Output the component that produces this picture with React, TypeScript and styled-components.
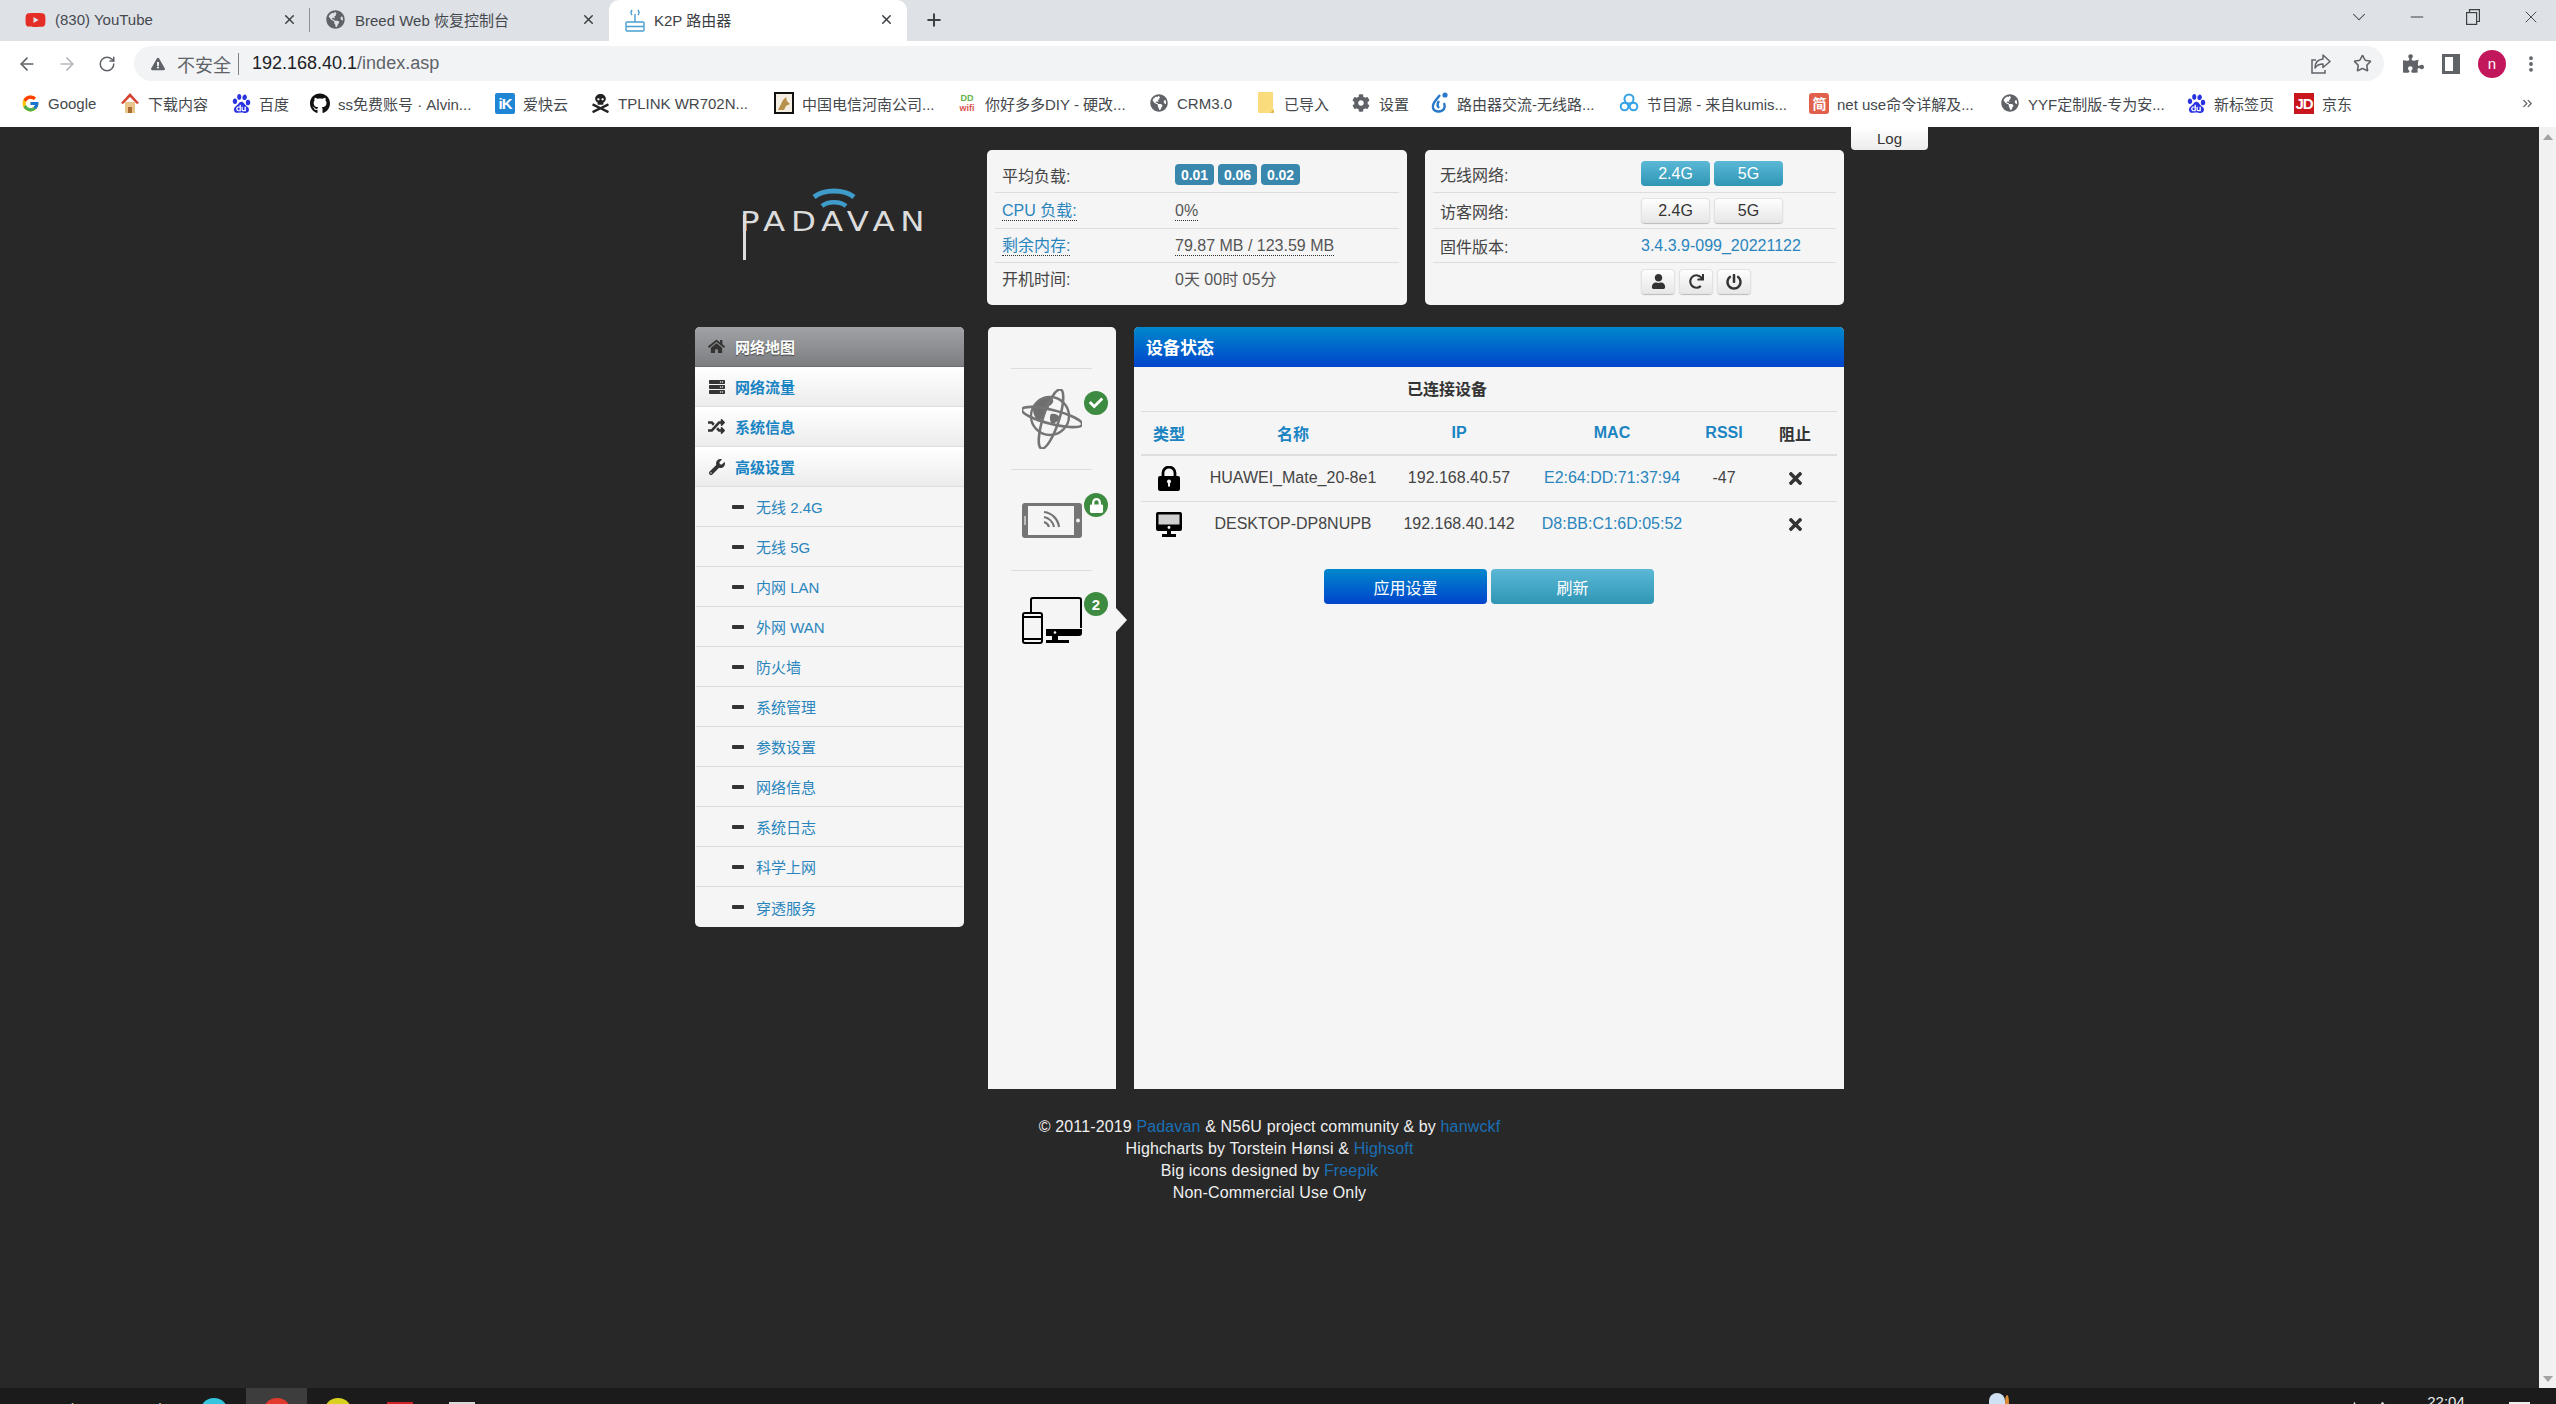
import React from "react";
import styled, { createGlobalStyle } from "styled-components";
import { ArrowLeft, ArrowRight, ChevronDown, ChevronsRight, Minus as LineMinus, MoreVertical, Plus, RotateCw, Star, X } from "lucide-react";
import {
  FaCheck, FaCog, FaExclamationTriangle, FaGithub, FaGlobeAmericas, FaHome, FaLock, FaPowerOff, FaPuzzlePiece,
  FaRandom, FaRedo, FaServer, FaSkullCrossbones, FaTimes, FaUser, FaWrench, FaYoutube,
} from "react-icons/fa";
import { FcGoogle } from "react-icons/fc";
import { SiBaidu } from "react-icons/si";

const SANS = `"Liberation Sans", "Noto Sans CJK SC", sans-serif`;

const Global = createGlobalStyle`
  html, body { margin: 0; padding: 0; background: #282828; overflow: hidden; }
  * { box-sizing: border-box; }
  body { font-family: ${SANS}; }
`;

const Window = styled.div`
  width: 2556px;
  height: 1404px;
  display: flex;
  flex-direction: column;
  overflow: hidden;
`;

/* ---- browser tabs ---- */
const TabStrip = styled.div`
  height: 41px;
  flex: none;
  background: #dee1e6;
  display: flex;
  align-items: stretch;
  padding-left: 10px;
  position: relative;
`;
const Tab = styled.div<{ $active?: boolean; $divided?: boolean }>`
  width: ${(p) => (p.$active ? 298 : p.$divided ? 300 : 299)}px;
  display: flex;
  align-items: center;
  padding: 0 13px 2px 15px;
  background: ${(p) => (p.$active ? "#fff" : "transparent")};
  border-radius: 10px 10px 0 0;
  position: relative;
  font-size: 15px;
  color: ${(p) => (p.$active ? "#3c4043" : "#45494e")};
  &::after {
    content: "";
    display: ${(p) => (p.$divided ? "block" : "none")};
    position: absolute;
    right: 0;
    top: 8px;
    bottom: 9px;
    width: 1px;
    background: #8e9196;
  }
`;
const TabIcon = styled.span`
  width: 21px;
  height: 24px;
  margin-right: 9px;
  display: flex;
  align-items: center;
  justify-content: center;
  flex: none;
`;
const TabTitle = styled.span`
  flex: 1;
  white-space: nowrap;
  overflow: hidden;
`;
const NewTab = styled.span`
  width: 24px;
  margin-left: 15px;
  padding-bottom: 2px;
  display: flex;
  align-items: center;
  justify-content: center;
  color: #3c4043;
`;
const WindowControls = styled.div`
  margin-left: auto;
  display: flex;
  align-items: flex-start;
  color: #3c4043;
`;
const WindowControl = styled.span<{ $w: number }>`
  width: ${(p) => p.$w}px;
  height: 33px;
  display: flex;
  align-items: center;
  justify-content: center;
`;

/* ---- address toolbar ---- */
const Toolbar = styled.div`
  height: 40px;
  flex: none;
  background: #fff;
  padding: 5px 0 0 7px;
  display: flex;
  align-items: flex-start;
  color: #5f6368;
`;
const NavButton = styled.span<{ $dim?: boolean }>`
  width: 40px;
  height: 35px;
  display: flex;
  align-items: center;
  justify-content: center;
  color: ${(p) => (p.$dim ? "#b5b8bc" : "#5f6368")};
`;
const Omnibox = styled.div`
  margin-left: 7px;
  width: 2250px;
  height: 35px;
  border-radius: 18px;
  background: #f1f3f4;
  display: flex;
  align-items: center;
  padding: 0 12px 0 17px;
  font-size: 18px;
`;
const Insecure = styled.span`
  color: #5f6368;
  font-size: 18px;
  margin-left: 12px;
`;
const OmniDivider = styled.span`
  width: 1px;
  height: 22px;
  background: #7d8084;
  margin: 0 13px 0 7px;
`;
const UrlHost = styled.span`
  color: #202124;
`;
const UrlPath = styled.span`
  color: #5f6368;
`;
const OmniActions = styled.span`
  margin-left: auto;
  display: flex;
  gap: 22px;
  align-items: center;
  color: #5f6368;
`;
const ToolActions = styled.div`
  display: flex;
  align-items: center;
  height: 35px;
  margin-left: 19px;
  gap: 18px;
  color: #5f6368;
`;
const Avatar = styled.span`
  width: 28px;
  height: 28px;
  border-radius: 50%;
  background: #c2185b;
  color: #fff;
  font-size: 15px;
  display: flex;
  align-items: center;
  justify-content: center;
`;
const MenuDots = styled(MoreVertical)`
  margin-left: -3px;
`;

/* ---- bookmarks ---- */
const BookmarkBar = styled.div`
  height: 46px;
  flex: none;
  background: #fff;
  display: flex;
  align-items: center;
  padding: 0 0 2px 20px;
  font-size: 15px;
  color: #45484c;
`;
const Bookmark = styled.div<{ $w: number }>`
  width: ${(p) => p.$w}px;
  flex: none;
  display: flex;
  align-items: center;
  gap: 8px;
`;
const BookmarkIcon = styled.span`
  width: 20px;
  height: 22px;
  flex: none;
  display: flex;
  align-items: center;
  justify-content: center;
`;
const BookmarkLabel = styled.span`
  white-space: nowrap;
  overflow: hidden;
`;
const Overflow = styled.span`
  margin-left: 166px;
  color: #5f6368;
  display: flex;
`;
const SquareFav = styled.span<{ $bg: string; $size?: number; $radius?: number }>`
  width: 20px;
  height: 21px;
  background: ${(p) => p.$bg};
  color: #fff;
  border-radius: ${(p) => p.$radius ?? 2}px;
  font-size: ${(p) => p.$size ?? 14}px;
  font-weight: 700;
  display: flex;
  align-items: center;
  justify-content: center;
  letter-spacing: -1px;
`;
const DdFav = styled.span`
  display: flex;
  flex-direction: column;
  align-items: center;
  font-size: 9px;
  line-height: 10px;
  font-weight: 700;
  color: #5fb34a;
  & > i {
    font-style: normal;
    color: #d9534f;
  }
`;

/* ---- router page ---- */
const Viewport = styled.div`
  flex: 1;
  min-height: 0;
  display: flex;
  background: #282828;
`;
const Page = styled.main`
  flex: 1;
  position: relative;
  padding: 23px 0 0 695px;
  color: #333;
  font-size: 16px;
`;
const Container = styled.div`
  width: 1149px;
`;
const LogTab = styled.div`
  position: absolute;
  top: 0;
  left: 1851px;
  width: 77px;
  height: 23px;
  border-radius: 0 0 4px 4px;
  background: linear-gradient(#fff, #ececec);
  color: #333;
  font-size: 15px;
  display: flex;
  align-items: center;
  justify-content: center;
`;
const TopRow = styled.div`
  display: flex;
  height: 155px;
`;
const Logo = styled.div`
  width: 292px;
  flex: none;
  position: relative;
`;
const WifiMark = styled.svg`
  position: absolute;
  left: 117px;
  top: 38px;
`;
const LogoWord = styled.span`
  position: absolute;
  left: 45px;
  top: 55px;
  font-family: "DejaVu Sans", "Liberation Sans", sans-serif;
  font-size: 27px;
  line-height: 34px;
  letter-spacing: 4.7px;
  color: #dcdcdc;
  white-space: nowrap;
  transform: scaleX(1.2);
  transform-origin: left center;
`;
const LogoStem = styled.span`
  position: absolute;
  left: 48px;
  top: 65px;
  width: 3px;
  height: 45px;
  background: #dcdcdc;
`;
const StatusPanel = styled.section<{ $w: number; $mr?: number }>`
  width: ${(p) => p.$w}px;
  margin-right: ${(p) => p.$mr ?? 0}px;
  background: #f5f5f5;
  border-radius: 5px;
  padding: 5px 8px;
  display: grid;
  grid-template-rows: 38px 36px 34px 1fr;
`;
const StatusRow = styled.div<{ $label: number; $last?: boolean; $nudge?: number }>`
  display: grid;
  grid-template-columns: ${(p) => p.$label}px 1fr;
  align-items: center;
  padding: ${(p) => Math.max(p.$nudge ?? 0, 0)}px 7px ${(p) => Math.max(-(p.$nudge ?? 0), 0)}px;
  border-bottom: ${(p) => (p.$last ? "none" : "1px solid #ddd")};
  white-space: nowrap;
`;
const StatusLabel = styled.span`
  color: #444;
`;
const Probe = styled.span<{ $blue?: boolean }>`
  justify-self: start;
  color: ${(p) => (p.$blue ? "#2a85bd" : "#555")};
  border-bottom: 1px dotted #333;
  line-height: 19px;
`;
const PlainValue = styled.span`
  color: #555;
`;
const FirmwareLink = styled.span`
  color: #2a85bd;
`;
const BadgeRow = styled.span`
  display: flex;
  gap: 4px;
`;
const LoadBadge = styled.span`
  width: 39px;
  height: 21px;
  border-radius: 4px;
  background: #3a87ad;
  color: #fff;
  font-size: 14px;
  font-weight: 700;
  display: flex;
  align-items: center;
  justify-content: center;
`;
const ButtonRow = styled.span`
  display: flex;
  gap: 4px;
`;
const ToggleButton = styled.span<{ $on?: boolean }>`
  width: 69px;
  height: 25px;
  border-radius: 4px;
  display: flex;
  align-items: center;
  justify-content: center;
  color: ${(p) => (p.$on ? "#fff" : "#333")};
  background: ${(p) => (p.$on ? "linear-gradient(#5bb8d6, #2f96b4)" : "linear-gradient(#fff, #e6e6e6)")};
  box-shadow: ${(p) => (p.$on ? "none" : "inset 0 0 0 1px #e2e2e2, 0 1px 1px #bbb")};
`;
const IconButton = styled.span`
  width: 34px;
  height: 25px;
  border-radius: 4px;
  display: flex;
  align-items: center;
  justify-content: center;
  color: #333;
  background: linear-gradient(#fff, #e6e6e6);
  box-shadow: inset 0 0 0 1px #e2e2e2, 0 1px 1px #bbb;
`;
const MainRow = styled.div`
  display: flex;
  margin-top: 22px;
  height: 762px;
  align-items: flex-start;
`;
const Menu = styled.nav`
  width: 269px;
  margin-right: 24px;
  flex: none;
  border-radius: 5px;
  overflow: hidden;
  background: #f5f5f5;
`;
const MenuRow = styled.div<{ $active?: boolean }>`
  height: 40px;
  display: flex;
  align-items: center;
  padding-left: 13px;
  font-size: 15px;
  font-weight: 700;
  color: ${(p) => (p.$active ? "#fff" : "#1b84c2")};
  background: ${(p) => (p.$active ? "linear-gradient(#a0a2a5, #7c7e81)" : "linear-gradient(#fff, #ececec)")};
  border-bottom: 1px solid ${(p) => (p.$active ? "#6c6e70" : "#dedede")};
  text-shadow: ${(p) => (p.$active ? "0 1px 1px #444" : "none")};
`;
const MenuGlyph = styled.span<{ $tone: string }>`
  width: 17px;
  margin-right: 10px;
  display: flex;
  justify-content: center;
  color: ${(p) => p.$tone};
`;
const SubRow = styled.div`
  height: 40px;
  margin: 0 1px;
  display: flex;
  align-items: center;
  padding-left: 36px;
  font-size: 15px;
  color: #2a85bd;
  border-bottom: 1px solid #dedede;
  &:last-child {
    border-bottom: none;
  }
`;
const SubDash = styled.span`
  width: 12px;
  height: 4px;
  background: #333;
  border-radius: 1px;
  margin-right: 12px;
`;
const Strip = styled.aside`
  width: 128px;
  height: 762px;
  margin-right: 18px;
  flex: none;
  background: #f5f5f5;
  border-radius: 5px 5px 0 0;
  padding: 41px 24px 0 23px;
  position: relative;
  &::after {
    content: "";
    position: absolute;
    left: 100%;
    top: 281px;
    border-left: 11px solid #f5f5f5;
    border-top: 12px solid transparent;
    border-bottom: 12px solid transparent;
  }
`;
const StripCell = styled.div`
  height: 101px;
  border-top: 1px solid #ddd;
  position: relative;
  display: flex;
  align-items: center;
  justify-content: center;
`;
const StateBadge = styled.span<{ $top: number }>`
  position: absolute;
  top: ${(p) => p.$top}px;
  right: -16px;
  width: 24px;
  height: 24px;
  border-radius: 50%;
  background: #3d8b40;
  color: #fff;
  font-size: 15px;
  font-weight: 700;
  display: flex;
  align-items: center;
  justify-content: center;
`;
const Content = styled.section`
  width: 710px;
  height: 762px;
  flex: none;
  background: #f5f5f5;
  border-radius: 5px 5px 0 0;
  overflow: hidden;
`;
const ContentHead = styled.h2`
  margin: 0;
  height: 40px;
  padding: 0 0 2px 12px;
  display: flex;
  align-items: center;
  font-size: 17px;
  font-weight: 700;
  color: #fff;
  background: linear-gradient(#0088cc, #0044cc);
`;
const ContentBody = styled.div`
  padding: 0 7px;
`;
const DeviceTable = styled.table`
  width: 696px;
  table-layout: fixed;
  border-collapse: collapse;
  font-size: 16px;
  color: #444;
`;
const TableTitle = styled.th`
  height: 44px;
  padding: 0 0 1px;
  font-weight: 700;
  color: #333;
  border-bottom: 1px solid #ddd;
`;
const HeadCell = styled.th<{ $plain?: boolean }>`
  height: 44px;
  padding: 0;
  font-weight: 700;
  color: ${(p) => (p.$plain ? "#333" : "#1b84c2")};
  border-bottom: 2px solid #ddd;
`;
const Cell = styled.td<{ $blue?: boolean }>`
  height: 46px;
  padding: 0;
  text-align: center;
  white-space: nowrap;
  color: ${(p) => (p.$blue ? "#2a85bd" : "#444")};
  border-bottom: 1px solid #ddd;
  tr:last-child > & {
    border-bottom: none;
  }
`;
const TypeGlyph = styled.span`
  display: flex;
  justify-content: center;
`;
const BlockGlyph = styled.span`
  display: flex;
  justify-content: center;
  color: #333;
`;
const ActionRow = styled.div`
  display: flex;
  justify-content: center;
  gap: 4px;
  margin-top: 22px;
`;
const ActionButton = styled.span<{ $tone: "primary" | "info" }>`
  width: 163px;
  height: 35px;
  border-radius: 4px;
  color: #fff;
  display: flex;
  align-items: center;
  justify-content: center;
  background: ${(p) =>
    p.$tone === "primary" ? "linear-gradient(#0088cc, #0044cc)" : "linear-gradient(#5bb8d6, #2f96b4)"};
`;
const Footer = styled.footer`
  margin-top: 27px;
  text-align: center;
  font-size: 16px;
  line-height: 22px;
  letter-spacing: 0.14px;
  color: #f0f0f0;
  & a {
    color: #1b6fb5;
    text-decoration: none;
  }
`;
const Scrollbar = styled.div`
  width: 17px;
  flex: none;
  background: #f1f1f1;
  display: flex;
  flex-direction: column;
  justify-content: space-between;
  align-items: center;
  padding: 7px 0 6px;
`;
const ScrollArrow = styled.span<{ $down?: boolean }>`
  width: 0;
  height: 0;
  border-left: 5px solid transparent;
  border-right: 5px solid transparent;
  border-bottom: ${(p) => (p.$down ? "none" : "6px solid #a3a3a3")};
  border-top: ${(p) => (p.$down ? "6px solid #a3a3a3" : "none")};
`;

/* ---- desktop taskbar, only its top edge is on screen ---- */
const Taskbar = styled.div`
  height: 16px;
  flex: none;
  background: #1b1b1b;
  display: flex;
  overflow: hidden;
  position: relative;
`;
const SearchHint = styled.span`
  margin: 12px 0 0 34px;
  width: 160px;
  color: #d6d6d6;
  font-size: 15px;
  white-space: nowrap;
  overflow: hidden;
`;
const TaskTile = styled.span<{ $on?: boolean; $w: number; $mr?: number }>`
  width: ${(p) => p.$w}px;
  margin-right: ${(p) => p.$mr ?? 0}px;
  background: ${(p) => (p.$on ? "#3d3d3d" : "transparent")};
  display: flex;
  justify-content: center;
`;
const TaskDot = styled.span<{ $bg: string; $square?: boolean }>`
  width: ${(p) => (p.$square ? 26 : 28)}px;
  height: 28px;
  margin-top: ${(p) => (p.$square ? 14 : 10)}px;
  border-radius: ${(p) => (p.$square ? "0" : "50%")};
  background: ${(p) => p.$bg};
`;
const TraySpace = styled.span`
  margin-left: auto;
  display: flex;
  align-items: flex-start;
`;
const TrayMark = styled.span<{ $bg: string; $w: number; $top: number; $mr?: number }>`
  width: ${(p) => p.$w}px;
  height: 16px;
  margin: ${(p) => p.$top}px ${(p) => p.$mr ?? 0}px 0 0;
  border-radius: 50% 50% 0 0;
  background: ${(p) => p.$bg};
`;
const Clock = styled.span`
  color: #eee;
  font-size: 15px;
  line-height: 18px;
  margin-top: 5px;
  width: 56px;
  text-align: center;
`;
const DeskEdge = styled.span`
  width: 21px;
  height: 2px;
  margin: 14px 26px 0 35px;
  background: #eee;
`;

const routerFav = (
  <svg width="20" height="24" viewBox="0 0 20 24" fill="none" stroke="#4a9fd0" strokeWidth="1.4">
    <rect x="1" y="14" width="18" height="9" rx="1" />
    <path d="M1 18.5h18M10 14V6" />
    <path d="M7 7a4 4 0 0 1 0-5M13 7a4 4 0 0 0 0-5" />
  </svg>
);

const houseFav = (
  <svg width="20" height="22" viewBox="0 0 20 22">
    <path d="M5 10h10v11H5z" fill="#e9c58c" />
    <path d="M10 1 1 11l2 1 7-7 7 7 2-1z" fill="#d8412f" />
    <path d="M8 15h4v6H8z" fill="#a86b32" />
  </svg>
);

const telecomFav = (
  <svg width="20" height="22" viewBox="0 0 20 22">
    <rect x="1" y="1" width="18" height="20" fill="#f4efe2" stroke="#111" strokeWidth="2" />
    <path d="M4 18 9 8l3-3 1 4 3 3-4 2-2 4z" fill="#b8914e" />
  </svg>
);

const folderFav = (
  <svg width="16" height="22" viewBox="0 0 16 22">
    <path d="M0 1a1 1 0 0 1 1-1h14v20a1 1 0 0 1-1 1H1a1 1 0 0 1-1-1z" fill="#fbdc7d" />
    <path d="M12 21l4-4v4z" fill="#e0b94f" />
  </svg>
);

const dropFav = (
  <svg width="20" height="22" viewBox="0 0 20 22" fill="none" stroke="#2a78c8" strokeWidth="2.4">
    <path d="M11 3C6 9 3 12 4 16c1 4 8 5 11 1 1-2 1-4 0-6" />
    <path d="M10 9c-2 3-2 5 0 7" />
    <circle cx="16" cy="3" r="1.4" fill="#2a78c8" />
  </svg>
);

const cloudFav = (
  <svg width="20" height="22" viewBox="0 0 20 22" fill="none" stroke="#35a3e6" strokeWidth="2">
    <circle cx="10" cy="7" r="4.5" />
    <circle cx="5.5" cy="14.5" r="3.8" />
    <circle cx="14.5" cy="14.5" r="3.8" />
  </svg>
);

const bookmarks: { label: string; w: number; icon: React.ReactNode }[] = [
  { label: "Google", w: 100, icon: <FcGoogle size={19} /> },
  { label: "下载内容", w: 111, icon: houseFav },
  { label: "百度", w: 79, icon: <SiBaidu size={19} color="#2932e1" /> },
  { label: "ss免费账号 · Alvin...", w: 185, icon: <FaGithub size={21} color="#111" /> },
  { label: "爱快云", w: 95, icon: <SquareFav $bg="#1f86d6" $size={15}>iK</SquareFav> },
  { label: "TPLINK WR702N...", w: 184, icon: <FaSkullCrossbones size={19} color="#222" /> },
  { label: "中国电信河南公司...", w: 183, icon: telecomFav },
  { label: "你好多多DIY - 硬改...", w: 192, icon: <DdFav>DD<i>wifi</i></DdFav> },
  { label: "CRM3.0", w: 107, icon: <FaGlobeAmericas size={18} color="#5f6368" /> },
  { label: "已导入", w: 95, icon: folderFav },
  { label: "设置", w: 78, icon: <FaCog size={18} color="#5f6368" /> },
  { label: "路由器交流-无线路...", w: 190, icon: dropFav },
  { label: "节目源 - 来自kumis...", w: 190, icon: cloudFav },
  { label: "net use命令详解及...", w: 191, icon: <SquareFav $bg="#e0604c" $size={14} $radius={3}>简</SquareFav> },
  { label: "YYF定制版-专为安...", w: 186, icon: <FaGlobeAmericas size={18} color="#5f6368" /> },
  { label: "新标签页", w: 108, icon: <SiBaidu size={19} color="#2932e1" /> },
  { label: "京东", w: 60, icon: <SquareFav $bg="#c9151e" $size={15} $radius={0}>JD</SquareFav> },
];

const subMenu = ["无线 2.4G", "无线 5G", "内网 LAN", "外网 WAN", "防火墙", "系统管理", "参数设置", "网络信息", "系统日志", "科学上网", "穿透服务"];

const RestoreIcon = () => (
  <svg width="14" height="16" viewBox="0 0 14 16" fill="none" stroke="currentColor" strokeWidth="1.2">
    <rect x="0.6" y="3.6" width="10" height="11.800" />
    <path d="M3.500 3.500V0.600H13.400V12.500H10.500" />
  </svg>
);

const ShareBoxIcon = () => (
  <svg width="20" height="21" viewBox="0 0 20 21" fill="none" stroke="currentColor" strokeWidth="1.5">
    <path d="M5 7H1v13h13v-3" />
    <path d="M12 2l7 6.500-7 6V11c-4 0-6 1-8 4 0-5 3-8.500 8-9z" strokeLinejoin="round" />
  </svg>
);

const SidePanelIcon = () => (
  <svg width="18" height="20" viewBox="0 0 18 20">
    <path d="M0 0h18v20H0zM3 3v14h8V3z" fill="currentColor" fillRule="evenodd" />
  </svg>
);

const PadlockGlyph = () => (
  <svg width="22" height="25" viewBox="0 0 22 25">
    <path d="M5 11V7a6 6 0 0 1 12 0v4" fill="none" stroke="#000" strokeWidth="2.800" />
    <rect x="0" y="10" width="22" height="15" rx="2" fill="#000" />
    <circle cx="11" cy="15.500" r="2" fill="#f5f5f5" />
    <rect x="10" y="15.500" width="2" height="5" fill="#f5f5f5" />
  </svg>
);

const DesktopGlyph = () => (
  <svg width="26" height="25" viewBox="0 0 26 25">
    <rect x="0" y="0" width="26" height="19" rx="2" fill="#000" />
    <rect x="2.500" y="2.500" width="21" height="10" fill="#d0d0d0" />
    <circle cx="13" cy="15.500" r="1.400" fill="#f5f5f5" />
    <path d="M11 19h4v3h-4zM6 22h14v3H6z" fill="#000" />
  </svg>
);

const GlobeArt = () => (
  <svg width="60" height="60" viewBox="0 0 60 60" fill="none">
    <circle cx="28" cy="27" r="19" stroke="#757575" strokeWidth="2.4" fill="#f5f5f5" />
    <path d="M11 20c3-8 11-12 19-11 3 3 0 7-3 8 0 4-3 3-5 6 1 4-3 8-5 9-3-2-6-6-6-12z" fill="#6f6f6f" />
    <path d="M29 25c4-1 8 1 9 4-1 3-5 4-7 7-3-2-4-8-2-11z" fill="#6f6f6f" />
    <ellipse cx="30" cy="28" rx="31" ry="7" transform="rotate(14 30 28)" stroke="#757575" strokeWidth="2.600" />
    <ellipse cx="29" cy="30" rx="31" ry="8" transform="rotate(-72 29 30)" stroke="#757575" strokeWidth="2.600" />
  </svg>
);

const TabletArt = () => (
  <svg width="60" height="35" viewBox="0 0 60 35" fill="none">
    <rect x="0" y="0" width="60" height="35" rx="3" fill="#757575" />
    <rect x="6" y="3" width="46" height="29" fill="#f5f5f5" />
    <rect x="2" y="13" width="2" height="9" fill="#bdbdbd" />
    <circle cx="56" cy="17.500" r="2" fill="#eee" />
    <g stroke="#757575" strokeWidth="2.200">
      <path d="M22 9c8 1 14 7 15 15" />
      <path d="M22 14c5 1 9 5 10 10" />
      <path d="M22 19c2 .5 4 2 5 5" />
    </g>
  </svg>
);

const DevicesArt = () => (
  <svg width="60" height="48" viewBox="0 0 60 48" fill="none">
    <path d="M9 15V3a2 2 0 0 1 2-2h46a2 2 0 0 1 2 2v28" stroke="#000" strokeWidth="2" />
    <path d="M24 32h36v4a3 3 0 0 1-3 3H24z" fill="#000" />
    <circle cx="33" cy="35.500" r="1.300" fill="#f5f5f5" />
    <path d="M30 39h6v4h-6zM24 43h23v3H24z" fill="#000" />
    <rect x="1" y="16" width="19" height="30" rx="2" stroke="#000" strokeWidth="2" fill="#f5f5f5" />
    <path d="M1 20h19M1 42h19" stroke="#000" strokeWidth="2" />
  </svg>
);

export default function App() {
  return (
    <Window>
      <Global />
      <TabStrip>
        <Tab $divided>
          <TabIcon><FaYoutube size={22} color="#e52d27" /></TabIcon>
          <TabTitle>(830) YouTube</TabTitle>
          <X size={15} strokeWidth={2.4} color="#3c4043" />
        </Tab>
        <Tab>
          <TabIcon><FaGlobeAmericas size={19} color="#5f6368" /></TabIcon>
          <TabTitle>Breed Web 恢复控制台</TabTitle>
          <X size={15} strokeWidth={2.4} color="#3c4043" />
        </Tab>
        <Tab $active>
          <TabIcon>{routerFav}</TabIcon>
          <TabTitle>K2P 路由器</TabTitle>
          <X size={15} strokeWidth={2.4} color="#3c4043" />
        </Tab>
        <NewTab><Plus size={20} strokeWidth={2.4} /></NewTab>
        <WindowControls>
          <WindowControl $w={70}><ChevronDown size={22} strokeWidth={1.1} /></WindowControl>
          <WindowControl $w={46}><LineMinus size={20} strokeWidth={1.2} /></WindowControl>
          <WindowControl $w={66}><RestoreIcon /></WindowControl>
          <WindowControl $w={50}><X size={20} strokeWidth={1.1} /></WindowControl>
        </WindowControls>
      </TabStrip>

      <Toolbar>
        <NavButton><ArrowLeft size={20} strokeWidth={2} /></NavButton>
        <NavButton $dim><ArrowRight size={20} strokeWidth={2} /></NavButton>
        <NavButton><RotateCw size={18} strokeWidth={2} /></NavButton>
        <Omnibox>
          <FaExclamationTriangle size={14} color="#5f6368" />
          <Insecure>不安全</Insecure>
          <OmniDivider />
          <UrlHost>192.168.40.1</UrlHost>
          <UrlPath>/index.asp</UrlPath>
          <OmniActions>
            <ShareBoxIcon />
            <Star size={19} strokeWidth={2} />
          </OmniActions>
        </Omnibox>
        <ToolActions>
          <FaPuzzlePiece size={21} />
          <SidePanelIcon />
          <Avatar>n</Avatar>
          <MenuDots size={20} strokeWidth={2.6} />
        </ToolActions>
      </Toolbar>

      <BookmarkBar>
        {bookmarks.map((b) => (
          <Bookmark key={b.label} $w={b.w}>
            <BookmarkIcon>{b.icon}</BookmarkIcon>
            <BookmarkLabel>{b.label}</BookmarkLabel>
          </Bookmark>
        ))}
        <Overflow><ChevronsRight size={15} /></Overflow>
      </BookmarkBar>

      <Viewport>
        <Page>
          <LogTab>Log</LogTab>
          <Container>
            <TopRow>
              <Logo>
                <WifiMark width="44" height="21" viewBox="0 0 44 21" fill="none" stroke="#3f9bc9">
                  <path d="M2 9C12 1 32 1 42 9" strokeWidth="5" />
                  <path d="M10 18c6-5 18-5 24 0" strokeWidth="4.500" />
                </WifiMark>
                <LogoWord>PADAVAN</LogoWord>
                <LogoStem />
              </Logo>
              <StatusPanel $w={420} $mr={18}>
                <StatusRow $label={173} $nudge={2}>
                  <StatusLabel>平均负载:</StatusLabel>
                  <BadgeRow>
                    <LoadBadge>0.01</LoadBadge>
                    <LoadBadge>0.06</LoadBadge>
                    <LoadBadge>0.02</LoadBadge>
                  </BadgeRow>
                </StatusRow>
                <StatusRow $label={173}>
                  <Probe $blue>CPU 负载:</Probe>
                  <Probe>0%</Probe>
                </StatusRow>
                <StatusRow $label={173}>
                  <Probe $blue>剩余内存:</Probe>
                  <Probe>79.87 MB / 123.59 MB</Probe>
                </StatusRow>
                <StatusRow $label={173} $last $nudge={-7}>
                  <StatusLabel>开机时间:</StatusLabel>
                  <PlainValue>0天 00时 05分</PlainValue>
                </StatusRow>
              </StatusPanel>
              <StatusPanel $w={419}>
                <StatusRow $label={201}>
                  <StatusLabel>无线网络:</StatusLabel>
                  <ButtonRow>
                    <ToggleButton $on>2.4G</ToggleButton>
                    <ToggleButton $on>5G</ToggleButton>
                  </ButtonRow>
                </StatusRow>
                <StatusRow $label={201}>
                  <StatusLabel>访客网络:</StatusLabel>
                  <ButtonRow>
                    <ToggleButton>2.4G</ToggleButton>
                    <ToggleButton>5G</ToggleButton>
                  </ButtonRow>
                </StatusRow>
                <StatusRow $label={201}>
                  <StatusLabel>固件版本:</StatusLabel>
                  <FirmwareLink>3.4.3.9-099_20221122</FirmwareLink>
                </StatusRow>
                <StatusRow $label={201} $last>
                  <span />
                  <ButtonRow>
                    <IconButton><FaUser size={15} /></IconButton>
                    <IconButton><FaRedo size={15} /></IconButton>
                    <IconButton><FaPowerOff size={16} /></IconButton>
                  </ButtonRow>
                </StatusRow>
              </StatusPanel>
            </TopRow>

            <MainRow>
              <Menu>
                <MenuRow $active><MenuGlyph $tone="#333"><FaHome size={17} /></MenuGlyph>网络地图</MenuRow>
                <MenuRow><MenuGlyph $tone="#333"><FaServer size={16} /></MenuGlyph>网络流量</MenuRow>
                <MenuRow><MenuGlyph $tone="#333"><FaRandom size={17} /></MenuGlyph>系统信息</MenuRow>
                <MenuRow><MenuGlyph $tone="#333"><FaWrench size={16} /></MenuGlyph>高级设置</MenuRow>
                {subMenu.map((s) => (
                  <SubRow key={s}><SubDash />{s}</SubRow>
                ))}
              </Menu>

              <Strip>
                <StripCell>
                  <GlobeArt />
                  <StateBadge $top={22}><FaCheck size={14} /></StateBadge>
                </StripCell>
                <StripCell>
                  <TabletArt />
                  <StateBadge $top={23}><FaLock size={15} /></StateBadge>
                </StripCell>
                <StripCell>
                  <DevicesArt />
                  <StateBadge $top={21}>2</StateBadge>
                </StripCell>
              </Strip>

              <Content>
                <ContentHead>设备状态</ContentHead>
                <ContentBody>
                  <DeviceTable>
                    <colgroup>
                      <col width="56" />
                      <col width="192" />
                      <col width="140" />
                      <col width="166" />
                      <col width="58" />
                      <col width="84" />
                    </colgroup>
                    <thead>
                      <tr>
                        <TableTitle colSpan={5}>已连接设备</TableTitle>
                        <TableTitle />
                      </tr>
                      <tr>
                        <HeadCell>类型</HeadCell>
                        <HeadCell>名称</HeadCell>
                        <HeadCell>IP</HeadCell>
                        <HeadCell>MAC</HeadCell>
                        <HeadCell>RSSI</HeadCell>
                        <HeadCell $plain>阻止</HeadCell>
                      </tr>
                    </thead>
                    <tbody>
                      <tr>
                        <Cell><TypeGlyph><PadlockGlyph /></TypeGlyph></Cell>
                        <Cell>HUAWEI_Mate_20-8e1</Cell>
                        <Cell>192.168.40.57</Cell>
                        <Cell $blue>E2:64:DD:71:37:94</Cell>
                        <Cell>-47</Cell>
                        <Cell><BlockGlyph><FaTimes size={19} /></BlockGlyph></Cell>
                      </tr>
                      <tr>
                        <Cell><TypeGlyph><DesktopGlyph /></TypeGlyph></Cell>
                        <Cell>DESKTOP-DP8NUPB</Cell>
                        <Cell>192.168.40.142</Cell>
                        <Cell $blue>D8:BB:C1:6D:05:52</Cell>
                        <Cell />
                        <Cell><BlockGlyph><FaTimes size={19} /></BlockGlyph></Cell>
                      </tr>
                    </tbody>
                  </DeviceTable>
                  <ActionRow>
                    <ActionButton $tone="primary">应用设置</ActionButton>
                    <ActionButton $tone="info">刷新</ActionButton>
                  </ActionRow>
                </ContentBody>
              </Content>
            </MainRow>

            <Footer>
              <div>© 2011-2019 <a>Padavan</a> &amp; N56U project community &amp; by <a>hanwckf</a></div>
              <div>Highcharts by Torstein Hønsi &amp; <a>Highsoft</a></div>
              <div>Big icons designed by <a>Freepik</a></div>
              <div>Non-Commercial Use Only</div>
            </Footer>
          </Container>
        </Page>
        <Scrollbar>
          <ScrollArrow />
          <ScrollArrow $down />
        </Scrollbar>
      </Viewport>

      <Taskbar>
        <SearchHint>Type here to search</SearchHint>
        <TaskTile $w={40} $mr={12}><TaskDot $bg="#35c6dd" /></TaskTile>
        <TaskTile $w={61} $on><TaskDot $bg="#e33a2f" /></TaskTile>
        <TaskTile $w={61}><TaskDot $bg="#d9d020" /></TaskTile>
        <TaskTile $w={63}><TaskDot $bg="#d32228" $square /></TaskTile>
        <TaskTile $w={62}><TaskDot $bg="#d8d8d8" $square /></TaskTile>
        <TraySpace>
          <TrayMark $bg="#cfe1f3" $w={16} $top={5} />
          <TrayMark $bg="#d98a32" $w={4} $top={7} $mr={344} />
          <TrayMark $bg="#dddddd" $w={3} $top={14} $mr={24} />
          <TrayMark $bg="#dddddd" $w={5} $top={14} $mr={33} />
          <Clock>22:04</Clock>
          <DeskEdge />
        </TraySpace>
      </Taskbar>
    </Window>
  );
}
